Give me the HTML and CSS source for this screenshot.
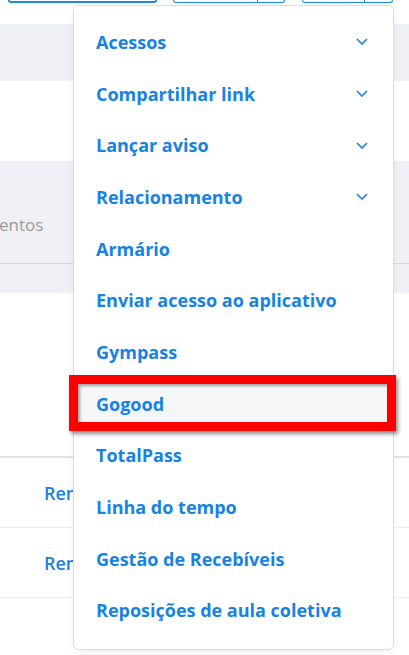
FILE: index.html
```html
<!DOCTYPE html>
<html lang="pt-BR">
<head>
<meta charset="utf-8">
<title>Menu</title>
<link rel="stylesheet" href="styles.css">
</head>
<body>
<div class="page">
  <div class="topbar">
    <span class="btn btn-a"></span>
    <span class="btn btn-b"><span class="seg seg-b1"></span><span class="seg seg-b2"></span></span>
    <span class="btn btn-c"><span class="seg seg-c1"></span><span class="seg seg-c2"></span></span>
  </div>
  <div class="band band-top"></div>
  <div class="spacer"></div>
  <div class="band band-head">
    <div class="head-cell">entos</div>
    <div class="head-line"></div>
  </div>
  <div class="spacer2"></div>
  <div class="row row-first"><span class="cell"><span class="link">Remover</span></span></div>
  <div class="row"><span class="cell"><span class="link">Remover</span></span></div>
  <div class="row row-last"></div>

  <div class="menu">
    <div class="item"><span>Acessos</span><svg class="chev" viewBox="0 0 12 7" width="12" height="7"><path d="M1 1l5 5 5-5" fill="none" stroke="currentColor" stroke-width="1.6"/></svg></div>
    <div class="item"><span>Compartilhar link</span><svg class="chev" viewBox="0 0 12 7" width="12" height="7"><path d="M1 1l5 5 5-5" fill="none" stroke="currentColor" stroke-width="1.6"/></svg></div>
    <div class="item"><span>Lançar aviso</span><svg class="chev" viewBox="0 0 12 7" width="12" height="7"><path d="M1 1l5 5 5-5" fill="none" stroke="currentColor" stroke-width="1.6"/></svg></div>
    <div class="item"><span>Relacionamento</span><svg class="chev" viewBox="0 0 12 7" width="12" height="7"><path d="M1 1l5 5 5-5" fill="none" stroke="currentColor" stroke-width="1.6"/></svg></div>
    <div class="item"><span>Armário</span></div>
    <div class="item"><span>Enviar acesso ao aplicativo</span></div>
    <div class="item"><span>Gympass</span></div>
    <div class="item item-hover"><span>Gogood</span><span class="annot"></span></div>
    <div class="item"><span>TotalPass</span></div>
    <div class="item"><span>Linha do tempo</span></div>
    <div class="item"><span>Gestão de Recebíveis</span></div>
    <div class="item"><span>Reposições de aula coletiva</span></div>
  </div>
</div>
</body>
</html>
```

FILE: styles.css
```css
* { box-sizing: border-box; }
html, body { margin: 0; padding: 0; background: #fff; }
body { font-family: "Open Sans", "Noto Sans", sans-serif; width: 409px; height: 655px; overflow: hidden; }
.page { position: relative; width: 409px; height: 655px; overflow: hidden; }

.topbar { height: 24px; display: flex; align-items: flex-start; }
.btn { display: flex; height: 3px; border: 1.5px solid #1e88e5; border-top: none; border-radius: 0 0 5px 5px; }
.btn-a { width: 149px; margin-left: 8px; border-width: 2px; }
.btn-b { width: 112px; margin-left: 16px; }
.btn-c { width: 91px; margin-left: 17px; }
.seg { display: block; height: 100%; }
.seg-b1 { width: 84px; border-right: 1.5px solid #1e88e5; }
.seg-c1 { width: 62px; border-right: 1.5px solid #1e88e5; }

.band { background: #eef0f5; }
.band-top { height: 57px; }
.spacer { height: 80px; }
.band-head { height: 132px; display: flex; flex-direction: column; }
.head-cell { height: 102px; display: flex; align-items: center; padding-top: 24px; font-size: 17px; color: #9a9a9a; margin-left: -1px; }
.head-line { height: 1px; background: #d3d6db; }
.spacer2 { height: 165px; border-bottom: 2px solid #e2e3e6; }
.row { height: 70px; border-bottom: 1px solid #ececec; display: flex; align-items: center; padding-left: 44px; }
.cell { width: 29px; overflow: hidden; white-space: nowrap; display: block; }
.link { font-size: 18px; font-weight: 600; color: #1a7fe0; }

.menu {
  position: absolute; left: 73px; top: 5px; width: 321px; height: 645px;
  background: #fff; border: 1px solid #dcdde0; border-radius: 6px;
  box-shadow: 0 2px 6px rgba(0,0,0,0.06);
  padding: 10px 0 11px;
  display: flex; flex-direction: column;
}
.item {
  position: relative; height: 51.7px; flex: none;
  display: flex; align-items: center; justify-content: space-between;
  padding: 0 25px 0 22px;
  font-size: 18px; font-weight: 700; color: #1683e3;
}
.chev { color: #1683e3; display: block; }
.item-hover { background: #f5f6f8; }
.annot {
  position: absolute; top: -3px; bottom: -1px; left: -5px; right: -3px;
  border: 9px solid #ff0000;
  box-shadow: 2px 3px 4px rgba(0,0,0,0.45), inset 2px 2px 3px rgba(0,0,0,0.35);
}
```
